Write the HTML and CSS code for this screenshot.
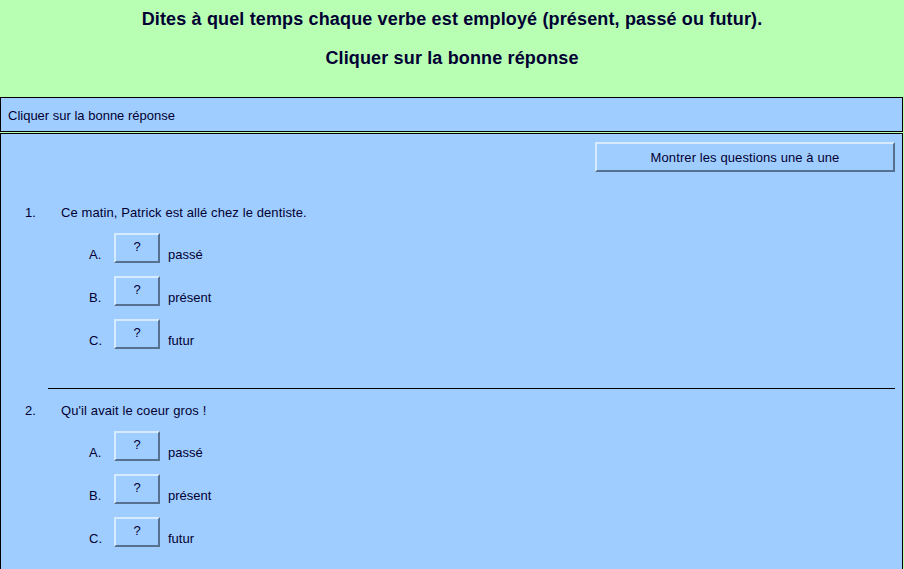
FILE: index.html
```html
<!DOCTYPE html>
<html lang="fr">
<head>
<meta charset="utf-8">
<title>Temps des verbes</title>
<link rel="stylesheet" href="styles.css">
</head>
<body>
<header class="title-bar">
  <h1 class="title">Dites à quel temps chaque verbe est employé (présent, passé ou futur).</h1>
  <h2 class="subtitle">Cliquer sur la bonne réponse</h2>
</header>
<div class="instructions">Cliquer sur la bonne réponse</div>
<main class="quiz">
  <div class="toolbar">
    <button class="btn btn-wide" type="button">Montrer les questions une à une</button>
  </div>
  <section class="question">
    <div class="q-line"><span class="q-num">1.</span><span class="q-text">Ce matin, Patrick est allé chez le dentiste.</span></div>
    <div class="answers">
      <div class="answer"><span class="a-letter">A.</span><button class="btn btn-q" type="button">?</button><span class="a-text">passé</span></div>
      <div class="answer"><span class="a-letter">B.</span><button class="btn btn-q" type="button">?</button><span class="a-text">présent</span></div>
      <div class="answer"><span class="a-letter">C.</span><button class="btn btn-q" type="button">?</button><span class="a-text">futur</span></div>
    </div>
  </section>
  <hr class="sep">
  <section class="question">
    <div class="q-line"><span class="q-num">2.</span><span class="q-text">Qu'il avait le coeur gros !</span></div>
    <div class="answers">
      <div class="answer"><span class="a-letter">A.</span><button class="btn btn-q" type="button">?</button><span class="a-text">passé</span></div>
      <div class="answer"><span class="a-letter">B.</span><button class="btn btn-q" type="button">?</button><span class="a-text">présent</span></div>
      <div class="answer"><span class="a-letter">C.</span><button class="btn btn-q" type="button">?</button><span class="a-text">futur</span></div>
    </div>
  </section>
</main>
</body>
</html>
```
FILE: styles.css
```css
* { box-sizing: border-box; }
html, body {
  margin: 0;
  padding: 0;
  background: #b8ffb4;
  font-family: "Liberation Sans", Arial, sans-serif;
  color: #000033;
  overflow: hidden;
}
body { width: 904px; height: 569px; }

.title-bar {
  height: 97px;
  padding-top: 9px;
  text-align: center;
}
.title, .subtitle {
  margin: 0;
  font-size: 18px;
  letter-spacing: 0.15px;
  font-weight: bold;
  line-height: 20px;
}
.subtitle { margin-top: 19px; }

.instructions {
  width: 903px;
  height: 35px;
  border: 1px solid #000;
  background: #a0cdff;
  font-size: 13px;
  line-height: 15px;
  padding: 10px 7px;
  margin-bottom: 1px;
}

.quiz {
  width: 903px;
  min-height: 460px;
  border: 1px solid #000;
  border-bottom: none;
  background: #a0cdff;
  padding: 8px 7px 0 0;
  font-size: 13px;
  line-height: 14px;
}

.toolbar { display: flex; justify-content: flex-end; }

.btn {
  font-family: "Liberation Sans", Arial, sans-serif;
  font-size: 13px;
  color: #000033;
  background: #a0cdff;
  border-style: solid;
  border-width: 2px;
  border-color: #d6ebff #56708f #56708f #d6ebff;
  padding: 0;
  margin: 0;
}
.btn-wide { width: 300px; height: 30px; letter-spacing: 0.1px; }
.btn-q { width: 46px; height: 30px; padding-bottom: 4px; }

.question { padding-left: 24px; }
.toolbar + .question { margin-top: 34px; }

.q-line { display: flex; }
.q-num { width: 36px; }
.q-text { letter-spacing: 0.1px; }

.answers {
  display: flex;
  flex-direction: column;
  gap: 13px;
  margin-top: 13px;
  padding-left: 64px;
}
.answer { display: flex; align-items: flex-start; }
.a-letter { width: 25px; margin-top: 15px; }
.a-text { margin-left: 8px; margin-top: 15px; }

.sep {
  margin: 39px 0 15px 47px;
  border: none;
  border-top: 1px solid #000;
  height: 0;
}
```
